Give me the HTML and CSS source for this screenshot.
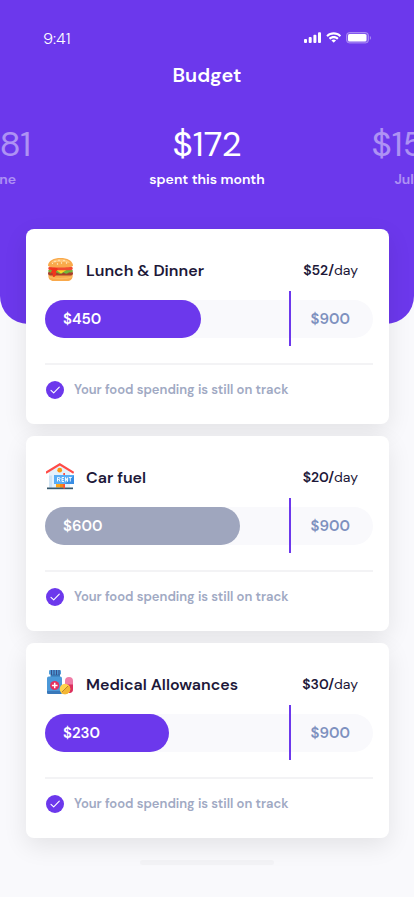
FILE: index.html
```html
<!DOCTYPE html>
<html lang="en">
<head>
<meta charset="utf-8">
<meta name="viewport" content="width=device-width, initial-scale=1">
<title>Budget</title>
<link rel="stylesheet" href="styles.css">
</head>
<body>
<svg class="defs" aria-hidden="true">
  <symbol id="check" viewBox="0 0 18 18">
    <circle cx="9" cy="9" r="9" fill="#6c38ec"/>
    <path d="M5 9.300l2.700 2.600 5.600-5.800" fill="none" stroke="#fff" stroke-width="1.100" stroke-linecap="round" stroke-linejoin="round"/>
  </symbol>
</svg>
<header class="hero">
  <div class="statusbar">
    <span>9:41</span>
    <svg width="67" height="12" viewBox="0 0 67 12" fill="#fff" aria-hidden="true">
      <rect x="0" y="7" width="3" height="4" rx="1"/>
      <rect x="4.700" y="5" width="3" height="6" rx="1"/>
      <rect x="9.400" y="2.700" width="3" height="8.300" rx="1"/>
      <rect x="14" y="0.300" width="3" height="10.700" rx="1"/>
      <path d="M29.700 2.500c2.200 0 4.200.8 5.700 2.300.1.100.3.100.4 0l1.100-1.100c.1-.1.100-.3 0-.5-4-3.800-10.400-3.800-14.400 0-.1.200-.1.400 0 .5l1.100 1.100c.1.100.3.100.4 0 1.500-1.500 3.500-2.300 5.700-2.300z"/>
      <path d="M29.700 6.200c1.200 0 2.300.4 3.200 1.200.1.100.3.100.4 0l1.100-1.100c.1-.1.100-.3 0-.5-2.700-2.400-6.700-2.400-9.400 0-.1.200-.1.400 0 .5l1.100 1.100c.1.100.3.100.4 0 .9-.8 2-1.200 3.200-1.200z"/>
      <path d="M31.900 8.600c.1-.1.100-.3 0-.4-1.300-1.100-3.100-1.100-4.400 0-.1.100-.1.300 0 .4l2 2c.1.100.3.100.4 0z"/>
      <rect x="42.500" y=".5" width="22" height="10.500" rx="3" fill="#fff" fill-opacity=".16" stroke="#fff" stroke-opacity=".35"/>
      <rect x="44" y="2" width="18.500" height="7.500" rx="1.600"/>
      <path d="M65.800 4v3.800c.8-.3 1.200-1 1.200-1.900s-.4-1.600-1.200-1.900z" opacity=".4"/>
    </svg>
  </div>
  <h1 class="title">Budget</h1>
  <div class="months">
    <div class="month"><strong class="amount">$181</strong><span class="caption">June</span></div>
    <div class="month current"><strong class="amount">$172</strong><span class="caption">spent this month</span></div>
    <div class="month"><strong class="amount">$159</strong><span class="caption">July</span></div>
  </div>
</header>
<main class="cards">
  <section class="card">
    <div class="card-head">
      <svg class="icon" width="28" height="28" viewBox="0 0 28 28" aria-hidden="true">
        <path d="M2.500 18h24c.8 5.500-2.500 7-5 7h-14c-3 0-5.800-2-5-7z" fill="#f9a94b"/>
        <path d="M3 20c3 2.500 19 2.500 23 0l.3 1c-3 3-20 3-23.300 0z" fill="#ffc26c" opacity=".7"/>
        <rect x="2" y="15" width="25" height="4.600" rx="2.300" fill="#a9402c"/>
        <path d="M2 14.500c2-2 23-2 25 0-.2 2-2 2.500-4 1.800-2 2.200-4 1.500-5.500.2-2 2-5 1.500-6.500-.2-2 1.500-8 1.500-9-1.800z" fill="#72b83b"/>
        <path d="M9 13h13l-7 4.500z" fill="#ffd326"/>
        <rect x="2.300" y="10.500" width="24.400" height="3.700" rx="1.800" fill="#f04b32"/>
        <path d="M2 10C2 4.500 8 2 14.500 2S27 4.500 27 10c-3 2-22 2-25 0z" fill="#f9a94b"/>
        <path d="M5 7c2-3 5-3.700 9.500-3.700S22 4 24 7c-5-1.500-14-1.500-19 0z" fill="#ffc477"/>
        <path d="M3 12.300l7-.3c2.500 0 2 2 0 3.500.5 1.500-.3 5.500-2 5.500s-1.400-2.500-1.200-4l-3 .6c1-1.200 2-2.300 2.200-3.300z" fill="#f2341c"/>
        <g fill="#fff3d2"><circle cx="9" cy="5.500" r=".7"/><circle cx="13" cy="4.300" r=".7"/><circle cx="18" cy="4.500" r=".7"/><circle cx="15.500" cy="7" r=".7"/><circle cx="11.500" cy="8" r=".7"/><circle cx="20.500" cy="7" r=".7"/><circle cx="6.500" cy="7.500" r=".6"/></g>
      </svg>
      <h2 class="name">Lunch &amp; Dinner</h2>
      <p class="rate"><b>$52/</b>day</p>
    </div>
    <div class="track">
      <div class="fill" style="width:47.6%">$450</div>
      <span class="marker"></span>
      <span class="limit">$900</span>
    </div>
    <p class="note"><svg width="18" height="18" aria-hidden="true"><use href="#check"/></svg>Your food spending is still on track</p>
  </section>
  <section class="card">
    <div class="card-head">
      <svg class="icon" width="28" height="28" viewBox="0 1.500 28 28" aria-hidden="true">
        <path d="M3 10.500L14 3.500l10 7V26H3z" fill="#e4f1fb"/>
        <path d="M3 14h3v12H3z" fill="#cfe3f3"/>
        <circle cx="13.700" cy="8.700" r="2.400" fill="#ff9811"/>
        <rect x="10" y="18" width="9" height="8" fill="#ffa414"/>
        <rect x="14" y="18" width="5" height="8" fill="#f58a16"/>
        <path d="M.8 10.700L13.800 2.800l13 7.900" fill="none" stroke="#ff4b47" stroke-width="2.200" stroke-linecap="square"/>
        <rect x="1" y="26" width="26" height="1.700" fill="#34566b"/>
        <rect x="17.300" y="11.500" width="1.700" height="15.500" fill="#ff4d3c"/>
        <rect x="8" y="13.500" width="20.500" height="9" fill="#58adf6"/>
        <path d="M28.500 13.500v9H19z" fill="#398ee4"/>
        <path d="M11.500 20v-4h1.300c1.700 0 1.700 2 0 2h-1.300m1.500 0l1 2M18 16h-2v4h2m-2-2h1.700M19.500 20v-4l2 4v-4M22.800 16h3m-1.500 0v4" fill="none" stroke="#fff" stroke-width=".9"/>
      </svg>
      <h2 class="name">Car fuel</h2>
      <p class="rate"><b>$20/</b>day</p>
    </div>
    <div class="track">
      <div class="fill muted" style="width:59.5%">$600</div>
      <span class="marker"></span>
      <span class="limit">$900</span>
    </div>
    <p class="note"><svg width="18" height="18" aria-hidden="true"><use href="#check"/></svg>Your food spending is still on track</p>
  </section>
  <section class="card">
    <div class="card-head">
      <svg class="icon" width="28" height="28" viewBox="0 0 28 28" aria-hidden="true">
        <path d="M4.500 4h9.500v4H4.500z" fill="#3778b5"/>
        <rect x="3" y="0" width="12" height="4.600" rx="1.200" fill="#4f9bd8"/>
        <path d="M5.500 0v5M8 0v5M10.500 0v5M13 0v5" stroke="#364f8b" stroke-width="1.100"/>
        <rect x="1" y="6.500" width="15" height="17.500" rx="1.800" fill="#4b98d8"/>
        <path d="M1 21h15v1.500a1.500 1.500 0 0 1-1.500 1.500h-12A1.500 1.500 0 0 1 1 22.500z" fill="#3978ba"/>
        <circle cx="8.700" cy="15.500" r="4.600" fill="#e52e5c"/>
        <path d="M8.700 12.700v5.600M5.900 15.500h5.600" stroke="#fff" stroke-width="1.500"/>
        <rect x="19" y="7" width="8" height="16" rx="4" fill="#ef7da7"/>
        <path d="M19 14.500h8V19a4 4 0 0 1-8 0z" fill="#dc315e"/>
        <circle cx="19" cy="19" r="5.300" fill="#ffd34b"/>
        <path d="M22.700 15.200a5.300 5.300 0 0 1-7.500 7.500z" fill="#f3b634"/>
        <path d="M16 22l6-6" stroke="#b77a28" stroke-width=".9"/>
      </svg>
      <h2 class="name">Medical Allowances</h2>
      <p class="rate"><b>$30/</b>day</p>
    </div>
    <div class="track">
      <div class="fill" style="width:37.8%">$230</div>
      <span class="marker"></span>
      <span class="limit">$900</span>
    </div>
    <p class="note"><svg width="18" height="18" aria-hidden="true"><use href="#check"/></svg>Your food spending is still on track</p>
  </section>
</main>
<div class="home-bar"></div>
</body>
</html>
```

FILE: styles.css
```css
* { box-sizing: border-box; }

body {
  margin: 0;
  min-height: 100vh;
  background: #f9f9fc;
  color: #1d1839;
  font-family: "DM Sans", Inter, sans-serif;
}

h1, h2, p { margin: 0; }
svg { display: block; flex: none; }
.defs { position: absolute; width: 0; height: 0; }

.hero {
  height: 324px;
  padding-top: 28px;
  border-radius: 0 0 28px 28px;
  background: #6c38ec;
  color: #fff;
  overflow: hidden;
}

.statusbar {
  display: flex;
  align-items: center;
  justify-content: space-between;
  height: 20px;
  padding: 0 43px;
  font-size: 16px;
  font-weight: 300;
}

.title {
  margin-top: 14px;
  font-size: 20px;
  font-weight: 600;
  line-height: 26px;
  text-align: center;
}

.months {
  display: grid;
  grid-template-columns: repeat(3, 1fr);
  width: 148%;
  margin: 34px 0 0 -24%;
  text-align: center;
}

.month { padding-right: 6px; opacity: .45; }
.month.current { padding-right: 0; opacity: 1; }

.amount {
  display: block;
  font-size: 35px;
  font-weight: 400;
  line-height: 44px;
}

.caption {
  display: block;
  margin-top: 4px;
  font-size: 14px;
  font-weight: 600;
  line-height: 18px;
}

.cards {
  display: grid;
  gap: 12px;
  margin: -95px 25px 0 26px;
}

.card {
  padding: 27px 16px 24px 19px;
  border-radius: 8px;
  background: #fff;
  box-shadow: 0 8px 24px rgba(0, 0, 0, .09);
}

.card-head {
  display: flex;
  align-items: center;
  gap: 12px;
  height: 28px;
  padding: 0 15px 0 1px;
}

.name {
  flex: 1;
  font-size: 16px;
  font-weight: 600;
}

.rate { font-size: 14px; }
.rate b { font-weight: 600; }

.track {
  position: relative;
  display: flex;
  align-items: center;
  justify-content: space-between;
  height: 38px;
  margin-top: 16px;
  padding-right: 23px;
  border-radius: 19px;
  background: #f9f9fc;
  font-size: 15px;
  font-weight: 600;
}

.fill {
  position: absolute;
  left: 0;
  padding-left: 18px;
  border-radius: 19px;
  background: #6c38ec;
  color: #fff;
  line-height: 38px;
}

.fill.muted { background: #9fa6be; }

.marker {
  position: absolute;
  top: -9px;
  bottom: -8px;
  left: 74.5%;
  width: 2px;
  background: #6c38ec;
}

.limit {
  margin-left: auto;
  color: #7e91bf;
}

.note {
  display: flex;
  align-items: center;
  gap: 10px;
  margin-top: 25px;
  padding: 15px 1px 1px;
  border-top: 2px solid #f3f3f5;
  color: #a0a9c3;
  font-size: 13px;
  font-weight: 600;
  line-height: 19px;
}

.home-bar {
  width: 134px;
  height: 5px;
  margin: 22px auto 32px;
  border-radius: 3px;
  background: #f3f3f6;
}
```
